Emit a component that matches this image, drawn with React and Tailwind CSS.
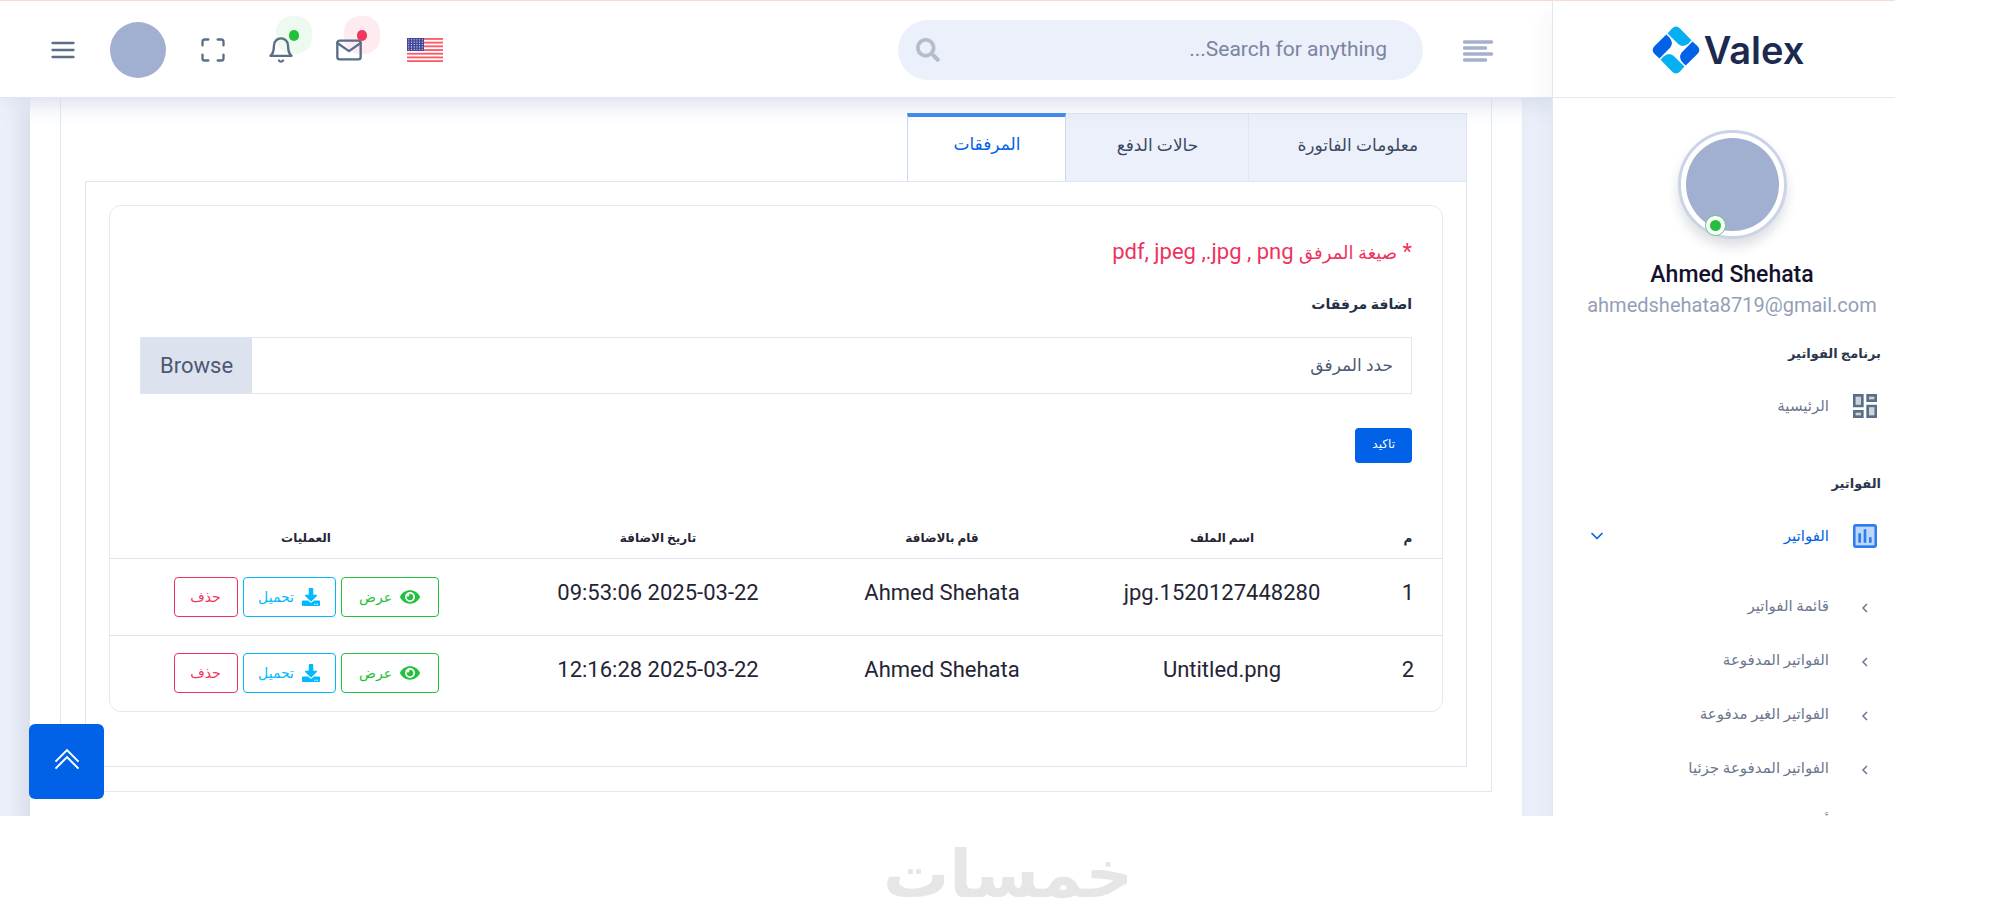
import { FaDownload, FaEye, FaSearch } from 'react-icons/fa'
import { FiBell, FiChevronDown, FiMail, FiMaximize, FiMenu } from 'react-icons/fi'
import { LiaAngleDoubleUpSolid } from 'react-icons/lia'

const tabs = [
  { label: 'معلومات الفاتورة', active: false },
  { label: 'حالات الدفع', active: false },
  { label: 'المرفقات', active: true },
]

const attachments = [
  { id: 1, file: '1520127448280.jpg', user: 'Ahmed Shehata', date: '2025-03-22 09:53:06' },
  { id: 2, file: 'Untitled.png', user: 'Ahmed Shehata', date: '2025-03-22 12:16:28' },
]

const invoiceLinks = [
  'قائمة الفواتير',
  'الفواتير المدفوعة',
  'الفواتير الغير مدفوعة',
  'الفواتير المدفوعة جزئيا',
  'أرشيف الفواتير',
]

function LogoMark() {
  const piece = 'M15.5 7.5 L20 2.6 Q24 -1.4 28 2.6 L39.5 14.3 L36.8 17.2 Q31.5 22 26.5 18.3 Z'
  return (
    <svg viewBox="0 0 48 48" className="size-12" aria-hidden="true">
      <path d={piece} fill="#05aff0" />
      <path d={piece} fill="#0162e8" transform="rotate(90 24 24)" />
      <path d={piece} fill="#05aff0" transform="rotate(180 24 24)" />
      <path d={piece} fill="#0162e8" transform="rotate(270 24 24)" />
    </svg>
  )
}

function DashboardIcon() {
  return (
    <svg viewBox="0 0 24 24" className="size-8 shrink-0 fill-[#5b6e88]" aria-hidden="true">
      <path d="M5 5h4v6H5zm10 8h4v6h-4zM5 17h4v2H5zM15 5h4v2h-4z" opacity=".3" />
      <path d="M3 13h8V3H3v10zm2-8h4v6H5V5zm8 16h8V11h-8v10zm2-8h4v6h-4v-6zM13 3v6h8V3h-8zm6 4h-4V5h4v2zM3 21h8v-6H3v6zm2-4h4v2H5v-2z" />
    </svg>
  )
}

function ChartIcon() {
  return (
    <svg viewBox="0 0 24 24" className="size-8 shrink-0 fill-[#2c7eee]" aria-hidden="true">
      <path d="M5 5h14v14H5z" opacity=".3" />
      <path d="M19 3H5c-1.1 0-2 .9-2 2v14c0 1.1.9 2 2 2h14c1.1 0 2-.9 2-2V5c0-1.1-.9-2-2-2zm0 16H5V5h14v14zM7 10h2v7H7zm4-3h2v10h-2zm4 6h2v4h-2z" />
    </svg>
  )
}

function FlagIcon() {
  return (
    <svg viewBox="0 0 36 24" className="h-6 w-9" aria-hidden="true">
      <rect width="36" height="24" fill="#fff" />
      {[0, 1, 2, 3, 4, 5, 6].map((i) => (
        <rect key={i} y={i * 3.7} width="36" height="1.85" fill="#fd5a65" />
      ))}
      <rect width="17" height="13" fill="#41479b" />
      {[0, 1, 2, 3, 4].map((row) =>
        [0, 1, 2, 3, 4, 5].map((col) => (
          <circle key={`${row}-${col}`} cx={1.8 + col * 2.7} cy={1.7 + row * 2.4} r=".55" fill="#fff" />
        ))
      )}
    </svg>
  )
}

function AlignIcon() {
  return (
    <svg viewBox="0 0 30 24" className="h-6 w-[30px] stroke-[#a5b0cc]" strokeWidth="3.5" strokeLinecap="round" aria-hidden="true">
      <path d="M1.5 4h27M1.5 10h21M1.5 16h27M1.5 22h21" />
    </svg>
  )
}

function Header() {
  return (
    <header className="relative z-10 flex h-[98px] shrink-0 items-center justify-between border-b border-[#e1e5ef] bg-white pt-[3px] pr-[59px] pl-[49px] shadow-[5px_7px_26px_-5px_#cdd4e7]">
      <div className="flex items-center gap-10">
        <button type="button" aria-label="Toggle sidebar">
          <AlignIcon />
        </button>
        <form className="flex h-[60px] w-[525px] items-center gap-4 rounded-full bg-[#ecf0fa] pr-9 pl-[18px]">
          <input
            type="search"
            aria-label="Search"
            placeholder="Search for anything..."
            className="min-w-0 flex-1 bg-transparent text-[21px] text-[#4d5875] outline-none placeholder:text-[#7b84a3]"
          />
          <button type="submit" aria-label="Submit search">
            <FaSearch className="size-6 text-[#b4bdce]" />
          </button>
        </form>
      </div>

      <div className="flex items-center gap-[33px] text-[#5b6e88]" dir="ltr">
        <button type="button" aria-label="Menu">
          <FiMenu className="size-7" strokeWidth={2} />
        </button>
        <button type="button" aria-label="Profile" className="size-14 rounded-full bg-[#a1afd1]" />
        <div className="flex items-center gap-10">
          <button type="button" aria-label="Fullscreen">
            <FiMaximize className="size-7" strokeWidth={2} />
          </button>
          <button type="button" aria-label="Notifications" className="relative">
            <span className="absolute -top-5 left-[9px] h-[38px] w-9 rounded-2xl bg-[#edfaf0]" />
            <FiBell className="relative size-7" strokeWidth={2} />
            <span className="absolute -top-1.5 left-[22px] h-[11px] w-2.5 rounded-full bg-[#22c03c]" />
          </button>
          <button type="button" aria-label="Messages" className="relative">
            <span className="absolute -top-5 left-[9px] h-[38px] w-9 rounded-2xl bg-[#fdebef]" />
            <FiMail className="relative size-7" strokeWidth={2} />
            <span className="absolute -top-1.5 left-[22px] h-[11px] w-2.5 rounded-full bg-[#f3365d]" />
          </button>
          <button type="button" aria-label="Language" className="px-1">
            <FlagIcon />
          </button>
        </div>
      </div>
    </header>
  )
}

function Sidebar() {
  return (
    <aside className="relative z-20 flex w-[343px] shrink-0 flex-col border-l border-[#e1e6f1] bg-white shadow-[-8px_12px_18px_0_rgba(25,42,70,0.04)]">
      <a href="#" dir="ltr" className="flex h-[98px] shrink-0 items-center justify-center gap-1 border-b border-[#e3e8f2] pt-0.5 pl-2">
        <LogoMark />
        <span className="font-[Inter,sans-serif] text-[38px] leading-none font-semibold text-[#1c2a4f]">Valex</span>
      </a>

      <div className="flex shrink-0 flex-col items-center pt-8 pl-4">
        <div className="relative size-[109px] rounded-full border-[3px] border-[#cbd3e9] bg-white p-[5px] shadow-[0_8px_12px_0_rgba(25,42,70,0.15)]">
          <div className="size-full rounded-full bg-[#a1afd1]" />
          <span className="absolute bottom-0 left-6 size-[21px] rounded-full border border-[#5fca70] bg-white p-1">
            <span className="block size-full rounded-full bg-[#22c03c]" />
          </span>
        </div>
        <h4 className="mt-5 text-[23px] leading-8 font-medium text-[#14112d]">Ahmed Shehata</h4>
        <span className="text-xl leading-7 text-[#949eb7]">ahmedshehata8719@gmail.com</span>
      </div>

      <nav className="shrink-0 pt-[15px] pr-[14px] pl-[34px] text-[15px] text-[#6d7790]">
        <h3 className="flex h-10 items-center text-[13px] font-bold text-[#2c364c]">برنامج الفواتير</h3>
        <a href="#" className="flex h-16 items-center gap-5">
          <DashboardIcon />
          الرئيسية
        </a>
        <h3 className="mt-[26px] flex h-10 items-center text-[13px] font-bold text-[#2c364c]">الفواتير</h3>
        <a href="#" className="flex h-16 items-center gap-5 text-[#0162e8]">
          <ChartIcon />
          الفواتير
          <FiChevronDown className="mr-auto size-5" />
        </a>
        <ul className="pt-[11px]">
          {invoiceLinks.map((link) => (
            <li key={link}>
              <a href="#" className="flex h-[54px] items-center gap-5">
                <svg viewBox="0 0 32 32" className="size-8 shrink-0 fill-none stroke-current" strokeWidth="1.5" aria-hidden="true">
                  <path d="M18 14l-4 4 4 4" />
                </svg>
                {link}
              </a>
            </li>
          ))}
        </ul>
      </nav>
    </aside>
  )
}

function Attachments() {
  return (
    <div className="rounded-xl border border-[#e1eaf7]">
      <form className="px-[30px] pt-7">
        <p className="text-[22px] leading-9 text-[#ee335e]">
          * <span className="text-lg leading-none">صيغة المرفق</span> pdf, jpeg ,.jpg , png
        </p>
        <h5 className="mt-4 text-sm leading-9 font-bold text-[#242f48]">اضافة مرفقات</h5>
        <label className="mt-[15px] flex h-[57px] cursor-pointer items-center justify-between border border-[#e1e5ef] text-[#4d5875]">
          <input type="file" className="sr-only" />
          <span className="px-[18px] text-[17px]">حدد المرفق</span>
          <span className="flex h-full items-center bg-[#dde2ef] px-[19px] text-[22px]">Browse</span>
        </label>
        <button type="submit" className="mt-[34px] h-[35px] rounded bg-[#0162e8] px-[17px] pb-1 text-xs text-white">
          تاكيد
        </button>
      </form>

      <table className="mt-[55px] w-full table-fixed text-center text-[#242435]">
        <thead>
          <tr className="h-10 border-b border-[#dde2ef] text-xs">
            <th className="w-[68px]">م</th>
            <th className="w-[304px]">اسم الملف</th>
            <th className="w-[256px]">قام بالاضافة</th>
            <th className="w-[312px]">تاريخ الاضافة</th>
            <th>العمليات</th>
          </tr>
        </thead>
        <tbody className="text-[22px]">
          {attachments.map((row) => (
            <tr key={row.id} className="h-[77px] border-b border-[#dde2ef] last:h-[76px] last:border-b-0">
              <td className="pb-2">{row.id}</td>
              <td className="pb-2">{row.file}</td>
              <td className="pb-2">{row.user}</td>
              <td className="pb-2">{row.date}</td>
              <td>
                <div className="flex items-center justify-center gap-[5px] text-sm">
                  <button type="button" className="flex h-10 w-[98px] items-center justify-center gap-2 rounded border border-[#22c03c] text-[#22c03c]">
                    <FaEye className="size-5" />
                    عرض
                  </button>
                  <button type="button" className="flex h-10 w-[93px] items-center justify-center gap-2 rounded border border-[#00b9ff] text-[#00b9ff]">
                    <FaDownload className="size-[18px]" />
                    تحميل
                  </button>
                  <button type="button" className="flex h-10 w-16 items-center justify-center rounded border border-[#ee335e] text-[#ee335e]">
                    حذف
                  </button>
                </div>
              </td>
            </tr>
          ))}
        </tbody>
      </table>
    </div>
  )
}

function App() {
  return (
    <div className="flex h-screen flex-col bg-white font-[Roboto,'DejaVu_Sans',sans-serif]">
      <div className="relative mr-[121px] flex min-h-0 flex-1 overflow-hidden" dir="rtl">
        <div className="absolute inset-x-0 top-0 z-30 h-px bg-[#f2ddd0]" />
        <Sidebar />

        <div className="flex min-w-0 flex-1 flex-col">
          <Header />
          <main className="flex-1 bg-[#ecf0fa] px-[30px]">
            <div className="h-full bg-white px-[30px] shadow-[-8px_12px_18px_0_rgba(25,42,70,0.1)]">
              <div className="border border-t-0 border-[#e3e7f2] px-6 pt-[15px] pb-6">
                <div className="flex text-[17px]" role="tablist">
                  {tabs.map((tab) => (
                    <button
                      key={tab.label}
                      type="button"
                      role="tab"
                      aria-selected={tab.active}
                      className={
                        tab.active
                          ? 'flex h-[68px] items-center border-x border-t-4 border-x-[#c5d8f5] border-t-[#2c7eee] px-[45px] pb-2 text-[#0162e8]'
                          : 'flex h-[68px] min-w-[183px] items-center justify-center border-t border-r border-[#e1e5ef] bg-[#ecf0fa] px-12 pb-1 text-[#3b4863]'
                      }
                    >
                      {tab.label}
                    </button>
                  ))}
                </div>
                <div className="border border-[#e1e5f3] px-[23px] pt-[23px] pb-[54px]">
                  <Attachments />
                </div>
              </div>
            </div>
          </main>
        </div>

        <a href="#" aria-label="Back to top" className="absolute bottom-[17px] left-[29px] z-20 flex size-[75px] items-center justify-center rounded-md bg-[#0162e8] pb-1 text-white">
          <LiaAngleDoubleUpSolid className="size-8" />
        </a>
      </div>

      <footer className="flex h-[102px] shrink-0 items-center justify-center pt-4" dir="rtl">
        <span className="text-[66px] leading-none font-bold text-[#e6e6e6]">خمسات</span>
      </footer>
    </div>
  )
}

export default App
